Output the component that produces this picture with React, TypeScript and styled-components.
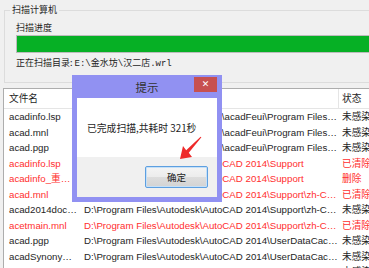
import React from 'react';
import styled, { createGlobalStyle } from 'styled-components';

const GlobalStyle = createGlobalStyle`
  html, body {
    margin: 0;
    padding: 0;
    background: #f0f0f0;
    overflow: hidden;
  }
`;

const Window = styled.div`
  position: relative;
  width: 420px;
  height: 268px;
  overflow: hidden;
  background: #f0f0f0;
  font-family: 'Noto Sans CJK SC', sans-serif;
  font-size: 9px;
  color: #1e1e1e;
`;

const Group = styled.fieldset`
  margin: 2px 0 0 4px;
  padding: 3px 0 11px 10px;
  border: 1px solid #dcdcdc;
  width: 420px;
  box-sizing: border-box;
`;

const GroupTitle = styled.legend`
  margin-left: -5px;
  padding: 0 2px;
  line-height: 16px;
`;

const Label = styled.div`
  line-height: 14px;
  margin-left: 1px;
`;

const Progress = styled.div`
  height: 18px;
  box-sizing: border-box;
  margin-left: 1px;
  border: 1px solid #bcbcbc;
  background: #e6e6e6;
`;

const ProgressFill = styled.div`
  height: 100%;
  background: #06b025;
`;

const PathLine = styled(Label)`
  margin-top: 3px;
  span {
    font-family: 'Liberation Mono', monospace;
    font-size: 9px;
  }
`;

const List = styled.div`
  margin: 5px 0 0 3px;
  width: 420px;
  border: 1px solid #adadad;
  background: #fff;
  font-family: 'Liberation Sans', 'Noto Sans CJK SC', sans-serif;
  font-size: 9.7px;
`;

const Row = styled.div<{ $header?: boolean; $red?: boolean }>`
  display: grid;
  grid-template-columns: 75px 260px 1fr;
  height: ${p => (p.$header ? '20px' : '15.5px')};
  line-height: ${p => (p.$header ? '19px' : '15.5px')};
  box-sizing: border-box;
  border-bottom: ${p => (p.$header ? '1px solid #e5e5e5' : 'none')};
  color: ${p => (p.$red ? '#ff2e2e' : '#1e1e1e')};
`;

const Cell = styled.div<{ $header?: boolean }>`
  padding-left: 5px;
  white-space: nowrap;
  overflow: hidden;
  text-overflow: ellipsis;
  border-right: ${p => (p.$header ? '1px solid #e5e5e5' : 'none')};
  &:last-child {
    padding-left: 3px;
    border-right: none;
  }
`;

const Dialog = styled.div`
  position: absolute;
  left: 72px;
  top: 75px;
  width: 150px;
  height: 127px;
  box-sizing: border-box;
  background: #9191f2;
  padding: 0 5px 5px;
  display: flex;
  flex-direction: column;
`;

const TitleBar = styled.div`
  height: 23px;
  display: grid;
  grid-template-columns: 1fr auto 1fr;
`;

const Title = styled.div`
  grid-column: 2;
  line-height: 24px;
  font-size: 11.5px;
  color: #333;
`;

const CloseButton = styled.div`
  grid-column: 3;
  justify-self: end;
  margin-top: 2px;
  width: 23px;
  height: 15px;
  background: #c75050;
  color: #fff;
  font-family: 'DejaVu Sans', sans-serif;
  font-size: 9px;
  font-weight: bold;
  line-height: 15px;
  text-align: center;
`;

const Message = styled.div`
  height: 59px;
  background: #fff;
  display: flex;
  align-items: center;
  padding-left: 10px;
  white-space: nowrap;
  font-size: 9.8px;
  color: #1e1e1e;
`;

const Footer = styled.div`
  flex: 1;
  background: #f0f0f0;
  display: flex;
  justify-content: flex-end;
  align-items: flex-start;
  padding: 9px 9px 0 0;
`;

const OkButton = styled.button`
  width: 63px;
  height: 22px;
  border: 1px solid #5d9fe0;
  border-radius: 2px;
  background: linear-gradient(#f4f4f4, #ececec 50%, #dddddd 50%, #d3d3d3);
  box-shadow: inset 0 0 0 1px #c5e0f8;
  font-family: 'Noto Sans CJK SC', sans-serif;
  font-size: 9.5px;
  color: #1e1e1e;
  padding: 0;
`;

const Arrow = styled.svg`
  position: absolute;
  left: 170px;
  top: 130px;
`;

type Item = { name: string; path: string; status: string; red?: boolean };

const feui = 'C:\\Users\\Administrator\\AppData\\acadFeui\\Program Files\\Autodesk\\AutoCAD 2014';
const support = 'D:\\Program Files\\Autodesk\\AutoCAD 2014\\Support';
const zh = 'D:\\Program Files\\Autodesk\\AutoCAD 2014\\Support\\zh-CN\\Template';
const cache = 'D:\\Program Files\\Autodesk\\AutoCAD 2014\\UserDataCache\\zh-CN';

const items: Item[] = [
  { name: 'acadinfo.lsp', path: feui, status: '未感染' },
  { name: 'acad.mnl', path: feui, status: '未感染' },
  { name: 'acad.pgp', path: feui, status: '未感染' },
  { name: 'acadinfo.lsp', path: support, status: '已清除', red: true },
  { name: 'acadinfo_重命名.lsp', path: support, status: '删除', red: true },
  { name: 'acad.mnl', path: zh, status: '已清除', red: true },
  { name: 'acad2014doc.lsp', path: zh, status: '未感染' },
  { name: 'acetmain.mnl', path: zh, status: '已清除', red: true },
  { name: 'acad.pgp', path: cache, status: '未感染' },
  { name: 'acadSynonymsGlobal.pgp', path: cache, status: '未感染' },
  { name: 'acad.cuix', path: cache, status: '未感染' },
];

export default function App() {
  return (
    <Window>
      <GlobalStyle />
      <Group>
        <GroupTitle>扫描计算机</GroupTitle>
        <Label>扫描进度</Label>
        <Progress>
          <ProgressFill style={{ width: '100%' }} />
        </Progress>
        <PathLine>
          正在扫描目录: <span>E:\</span>金水坊<span>\</span>汉二店<span>.wrl</span>
        </PathLine>
      </Group>

      <List>
        <Row $header>
          <Cell $header>文件名</Cell>
          <Cell $header>路径</Cell>
          <Cell $header>状态</Cell>
        </Row>
        {items.map((it, i) => (
          <Row key={i} $red={it.red}>
            <Cell>{it.name}</Cell>
            <Cell>{it.path}</Cell>
            <Cell>{it.status}</Cell>
          </Row>
        ))}
      </List>

      <Dialog>
        <TitleBar>
          <Title>提示</Title>
          <CloseButton>✕</CloseButton>
        </TitleBar>
        <Message>已完成扫描,共耗时 321秒</Message>
        <Footer>
          <OkButton>确定</OkButton>
        </Footer>
      </Dialog>

      <Arrow width="40" height="35" viewBox="0 0 40 35">
        <polygon
          points="30.6,6.7 31.4,7.3 18.8,22.7 22,27 10,29 13,16 16.2,20.3"
          fill="#ee2a2a"
        />
      </Arrow>
    </Window>
  );
}
